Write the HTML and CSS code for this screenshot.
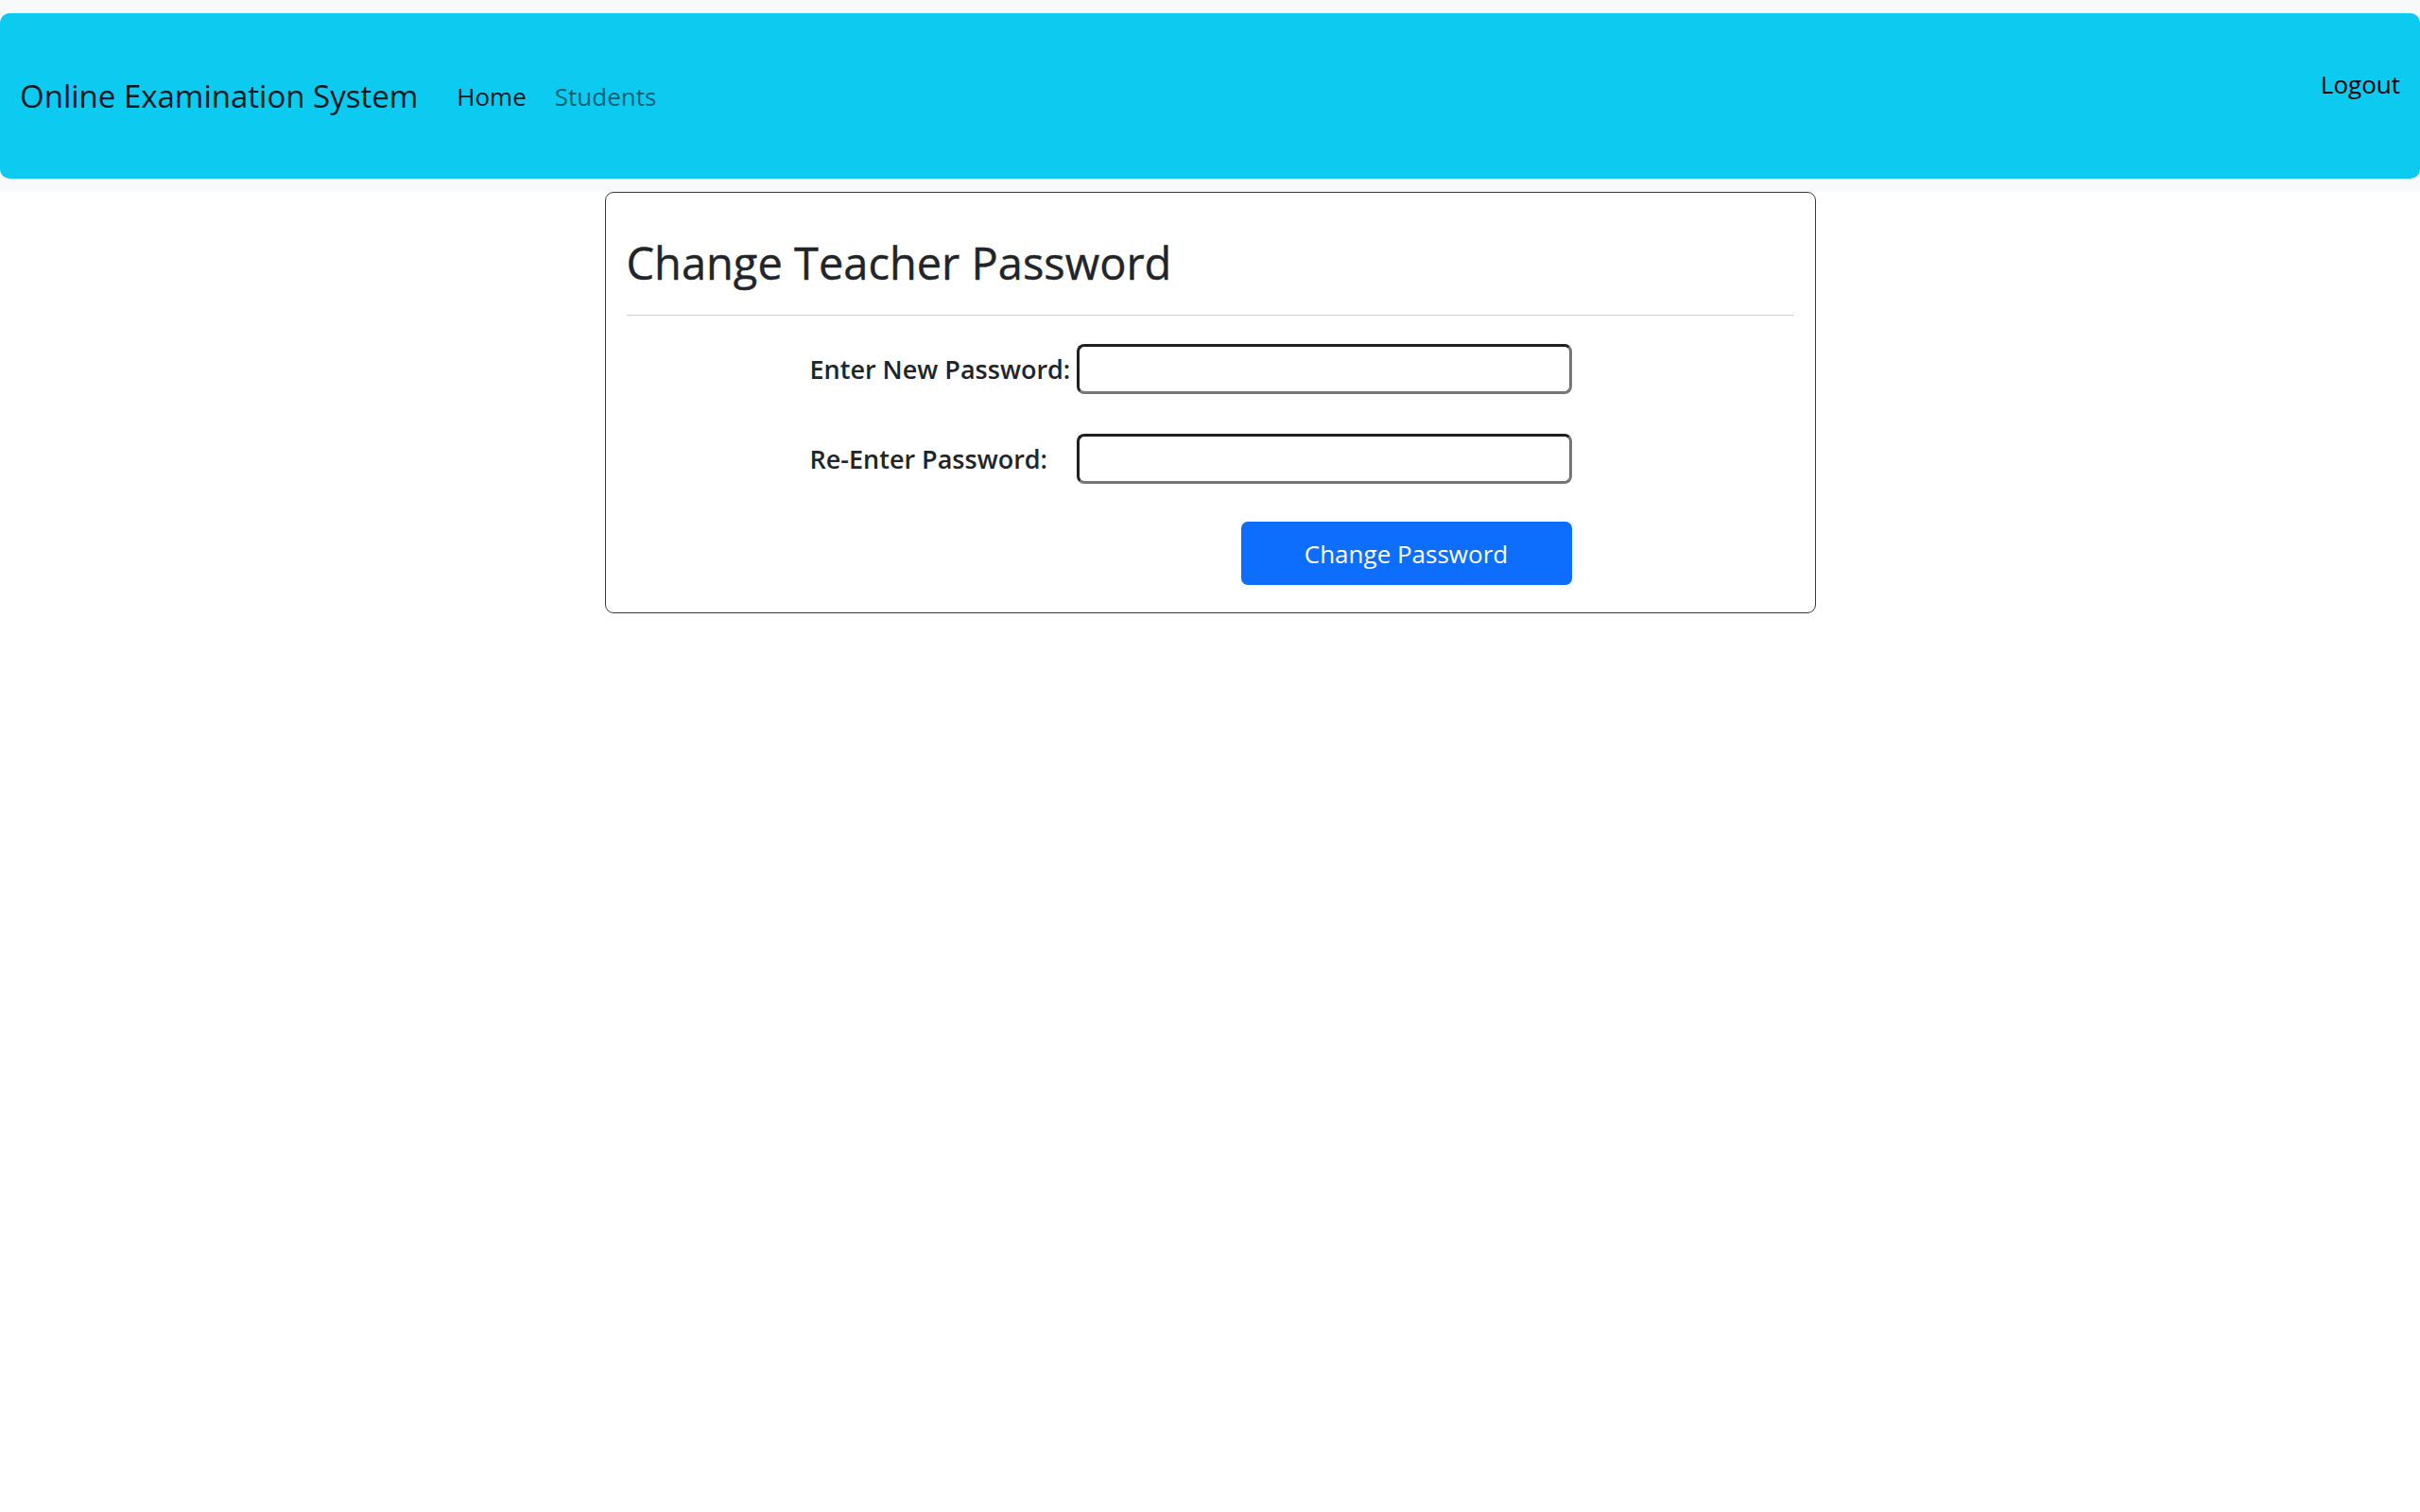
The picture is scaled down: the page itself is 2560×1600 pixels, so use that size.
FILE: index.html
```html
<!DOCTYPE html>
<html lang="en">
<head>
<meta charset="utf-8">
<title>Change Teacher Password</title>
<link rel="stylesheet" href="styles.css">
</head>
<body>
<header class="topband">
  <nav class="navbar">
    <a class="brand" href="#">Online Examination System</a>
    <ul class="navlinks">
      <li><a class="navlink active" href="#">Home</a></li>
      <li><a class="navlink" href="#">Students</a></li>
    </ul>
    <a class="logout" href="#">Logout</a>
  </nav>
</header>
<main class="card">
  <h2 class="title">Change Teacher Password</h2>
  <hr class="rule">
  <form class="pwform">
    <label class="lbl" for="p1">Enter New Password:</label>
    <input class="field" id="p1" type="password">
    <label class="lbl" for="p2">Re-Enter Password:</label>
    <input class="field" id="p2" type="password">
    <button class="btn" type="button">Change Password</button>
  </form>
</main>
</body>
</html>
```
FILE: styles.css
```css
* { box-sizing: border-box; }
html, body { margin: 0; padding: 0; }
body {
  background: #ffffff;
  font-family: "Open Sans", "Noto Sans", sans-serif;
  color: #212529;
}
.topband {
  background: #f8f9fa;
  padding: 14px 0;
}
.navbar {
  height: 175px;
  background: #0dcaf0;
  border-radius: 10px;
  display: flex;
  align-items: center;
  padding: 0 0 0 21px;
}
.brand {
  font-size: 33px;
  color: rgba(0,0,0,0.9);
  text-decoration: none;
  margin-right: 41px;
  white-space: nowrap;
}
.navlinks {
  list-style: none;
  margin: 0;
  padding: 0;
  display: flex;
  gap: 30px;
}
.navlink {
  font-size: 26px;
  color: rgba(0,0,0,0.55);
  text-decoration: none;
}
.navlink.active { color: rgba(0,0,0,0.9); }
.logout {
  margin-left: auto;
  margin-right: 21px;
  margin-bottom: 26px;
  font-size: 26px;
  color: #000;
  text-decoration: none;
}
.card {
  width: 1281px;
  margin: 0 auto;
  border: 1px solid #3a3a3a;
  border-radius: 9px;
  padding: 22px 22px 29px 22px;
}
.title {
  margin: 0;
  padding-top: 24px;
  font-size: 47px;
  font-weight: 500;
  line-height: 1.2;
  color: #212529;
  -webkit-text-stroke: 0.4px #212529;
}
.rule {
  border: 0;
  border-top: 1px solid #cfcfcf;
  margin: 27px 0 30px 0;
}
.pwform {
  display: grid;
  grid-template-columns: 282px 524px;
  row-gap: 42px;
  align-items: center;
  margin-left: 194px;
}
.lbl {
  font-size: 27px;
  font-weight: 600;
  color: #212529;
}
.field {
  width: 524px;
  height: 53px;
  border-style: solid;
  border-width: 3px;
  border-color: #1f1f1f #767676 #767676 #1f1f1f;
  border-radius: 8px;
  background: #fff;
  font-size: 26px;
}
.btn {
  grid-column: 2;
  justify-self: end;
  margin-top: -2px;
  width: 350px;
  height: 67px;
  background: #0d6efd;
  color: #fff;
  border: 0;
  border-radius: 7px;
  font-family: "Open Sans", "Noto Sans", sans-serif;
  font-size: 26px;
}
```
